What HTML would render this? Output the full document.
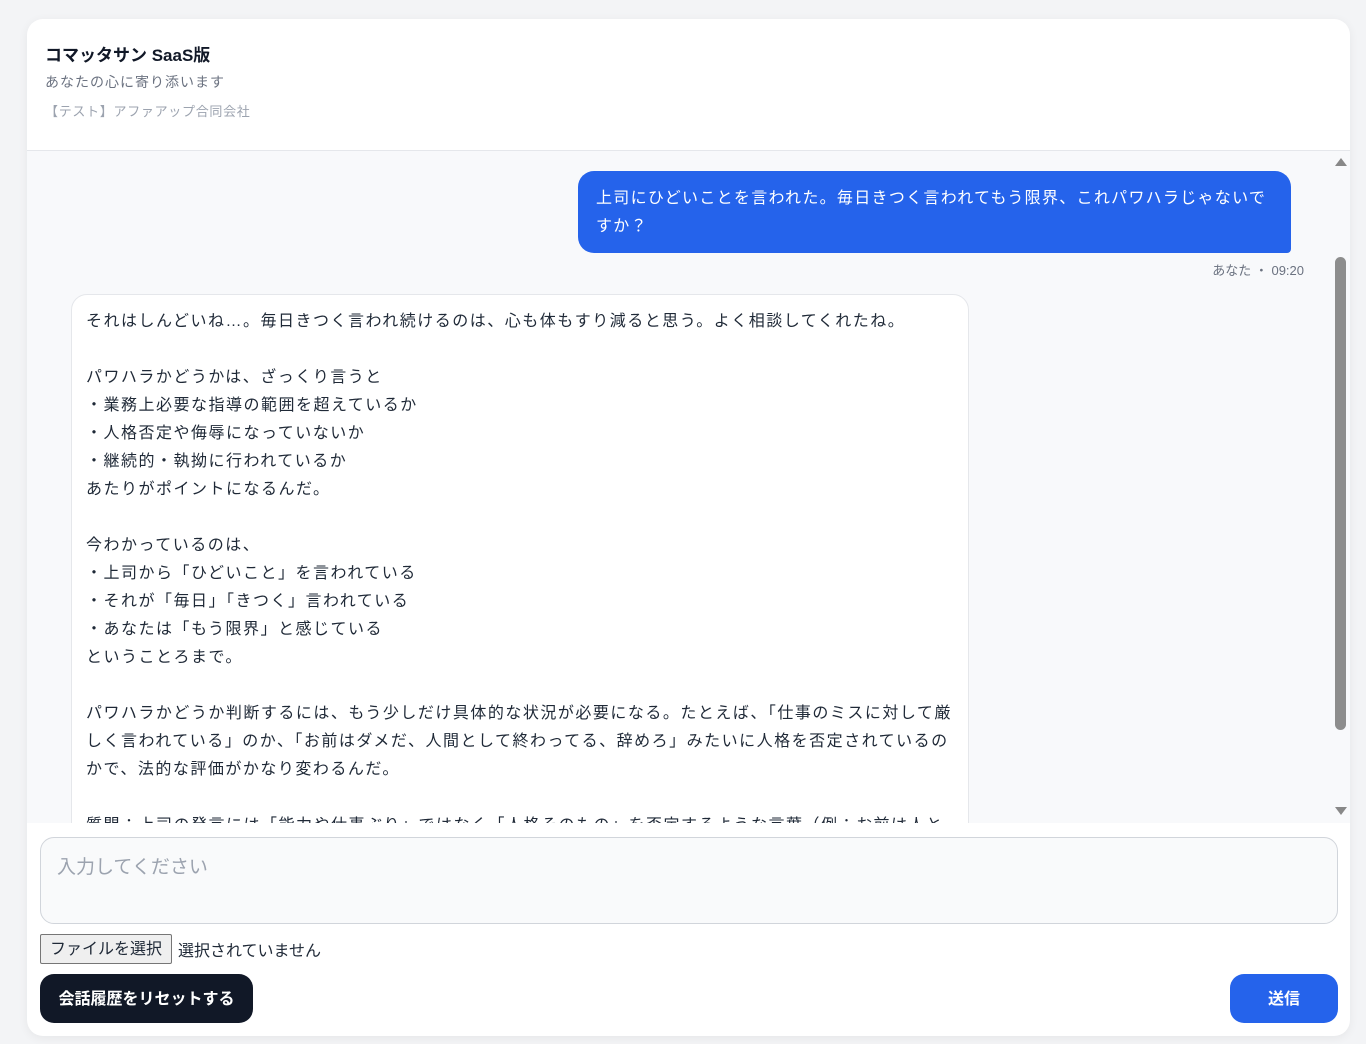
<!DOCTYPE html>
<html><head><meta charset="utf-8"><style>
*{box-sizing:border-box;margin:0;padding:0}
body{width:1366px;height:1044px;background:#f3f4f6;font-family:"Liberation Sans","Noto Sans CJK JP",sans-serif;position:relative;overflow:hidden}
.card{position:absolute;left:27px;top:19px;width:1323px;height:1017px;background:#fff;border-radius:16px;box-shadow:0 2px 10px rgba(0,0,0,.06);overflow:hidden}
.hd{position:absolute;left:0;top:0;width:100%;height:132px;border-bottom:1px solid #e5e7eb}
.t1{position:absolute;left:18px;top:22px;font-size:17px;font-weight:bold;color:#111827}
.t2{position:absolute;left:18px;top:53px;font-size:14px;color:#6b7280;letter-spacing:1px}
.t3{position:absolute;left:18px;top:82px;font-size:13px;color:#9ca3af;letter-spacing:0.7px}
.msgs{position:absolute;left:0;top:132px;width:1305px;height:672px;background:#f8f9fb;overflow:hidden}
.ub{position:absolute;left:551px;top:20px;width:713px;height:82px;background:#2563eb;color:#fff;border-radius:16px 16px 4px 16px;padding:14px 18px;font-size:16px;line-height:28px;letter-spacing:1.3px}
.meta{position:absolute;right:28px;top:109px;font-size:13px;color:#6b7280}
.ab{position:absolute;left:44px;top:143px;width:898px;height:600px;background:#fff;border:1px solid #e5e7eb;border-radius:16px;padding:13px 14px;font-size:16px;line-height:28px;color:#1f2937;letter-spacing:1.5px}
.sb{position:absolute;left:1305px;top:132px;width:18px;height:672px;background:#f8f9fb}
.thumb{position:absolute;left:1308px;top:238px;width:11px;height:473px;background:#8d8d8d;border-radius:6px}
.inp{position:absolute;left:13px;top:818px;width:1298px;height:87px;border:1px solid #d1d5db;border-radius:14px;background:#f9fafb;padding:14px 16px;font-size:19px;color:#9ca3af}
.file{position:absolute;left:13px;top:915px;font-size:16px;color:#1f2937;display:flex;align-items:center}
.fb{border:1px solid #767676;background:#efefef;padding:2px 9px;border-radius:2px;margin-right:6px;height:30px;line-height:26px}
.reset{position:absolute;left:13px;top:955px;width:213px;height:49px;background:#111827;color:#fff;border-radius:14px;font-size:16px;font-weight:bold;text-align:center;line-height:51px}
.send{position:absolute;left:1203px;top:955px;width:108px;height:49px;background:#2563eb;color:#fff;border-radius:14px;font-size:16px;font-weight:bold;text-align:center;line-height:51px}
</style></head><body>
<div class="card">
<div class="hd"><div class="t1">コマッタサン SaaS版</div><div class="t2">あなたの心に寄り添います</div><div class="t3">【テスト】アファアップ合同会社</div></div>
<div class="msgs">
<div class="ub">上司にひどいことを言われた。毎日きつく言われてもう限界、これパワハラじゃないですか？</div>
<div class="meta">あなた ・ 09:20</div>
<div class="ab">それはしんどいね…。毎日きつく言われ続けるのは、心も体もすり減ると思う。よく相談してくれたね。<br><br>パワハラかどうかは、ざっくり言うと<br>・業務上必要な指導の範囲を超えているか<br>・人格否定や侮辱になっていないか<br>・継続的・執拗に行われているか<br>あたりがポイントになるんだ。<br><br>今わかっているのは、<br>・上司から「ひどいこと」を言われている<br>・それが「毎日」「きつく」言われている<br>・あなたは「もう限界」と感じている<br>ということろまで。<br><br>パワハラかどうか判断するには、もう少しだけ具体的な状況が必要になる。たとえば、「仕事のミスに対して厳しく言われている」のか、「お前はダメだ、人間として終わってる、辞めろ」みたいに人格を否定されているのかで、法的な評価がかなり変わるんだ。<br><br>質問：上司の発言には「能力や仕事ぶり」ではなく「人格そのもの」を否定するような言葉（例：お前は人と</div>
</div>
<div class="sb"><svg style="position:absolute;left:3px;top:6px" width="12" height="9"><path d="M0 9L6 1 12 9Z" fill="#888"/></svg><svg style="position:absolute;left:3px;top:656px" width="12" height="9"><path d="M0 0L6 8 12 0Z" fill="#888"/></svg></div>
<div class="thumb"></div>
<div class="inp">入力してください</div>
<div class="file"><span class="fb">ファイルを選択</span>選択されていません</div>
<div class="reset">会話履歴をリセットする</div>
<div class="send">送信</div>
</div>
</body></html>
